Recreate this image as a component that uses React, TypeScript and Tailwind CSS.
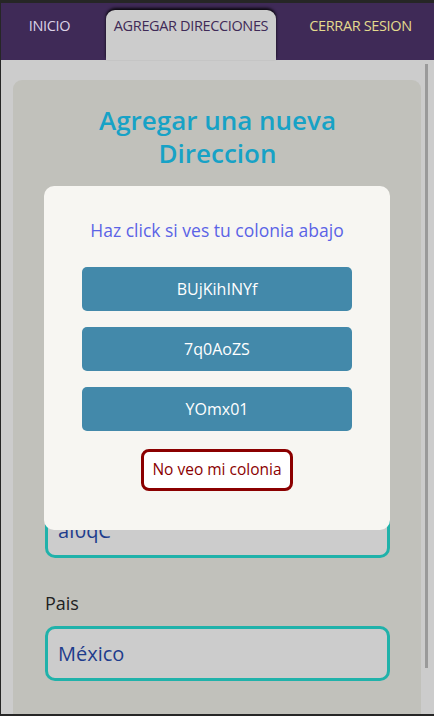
import React from 'react';

const colonias = ['BUjKihINYf', '7q0AoZS', 'YOmx01'];

function Campo({ label, value }: { label: string; value: string }) {
  return (
    <div className="flex flex-col">
      <label className="text-[18px] leading-[24px] text-[#222222] mb-[11px]">{label}</label>
      <div className="h-[55px] rounded-[10px] border-[3px] border-[#20b2aa] bg-[#cccccc] flex items-center pl-[10px] text-[20px] text-[#1e3c8c]">
        {value}
      </div>
    </div>
  );
}

export default function App() {
  return (
    <div className="relative flex h-[716px] w-[434px] flex-col overflow-hidden border-t-[3px] border-b-2 border-l border-[#262626] bg-[#cccccc] font-['Open_Sans',sans-serif]">
      <nav className="flex h-[57px] shrink-0 whitespace-nowrap bg-[#3f2a57] text-[14.5px] leading-[24px] tracking-[-0.025em]">
        <div className="ml-[21px] flex w-[55px] justify-center pt-[11px] text-[#dcd3e6]">INICIO</div>
        <div className="ml-[29px] mt-[7px] flex w-[170px] justify-center rounded-t-[9px] bg-[#cccccc] pt-[4px] text-[#3f2a57] shadow-[0_-2px_3px_rgba(0,0,0,0.85)]">
          AGREGAR DIRECCIONES
        </div>
        <div className="ml-[25px] flex w-[119px] justify-center pt-[11px] text-[#e3da8e]">CERRAR SESION</div>
      </nav>

      <main className="relative flex-1 pl-[12px] pr-[13px] pt-[20px]">
        <div className="h-[700px] rounded-[9px] bg-[#c1c1bb] pl-[32px] pr-[31px] pt-[24px]">
          <h1 className="mb-[52px] text-center text-[26px] font-semibold leading-[33px] text-[#17a2c6]">
            Agregar una nueva Direccion
          </h1>
          <div className="flex flex-col gap-[33px]">
            <Campo label="Calle" value="Av. Reforma" />
            <Campo label="Numero" value="123" />
            <Campo label="Colonia" value="aI0qC" />
            <Campo label="Pais" value="México" />
          </div>
        </div>

        <div className="absolute left-[424px] top-[4px] h-[604px] w-[3px] bg-[#9a9a9a]" />

        <div className="absolute left-[43px] top-[126px] flex h-[344px] w-[346px] flex-col items-center rounded-[10px] bg-[#f7f6f2] pt-[32px]">
          <p className="mb-[25px] text-[17.5px] leading-[24px] text-[#5b63e6]">Haz click si ves tu colonia abajo</p>
          <div className="flex flex-col gap-[16px]">
            {colonias.map((c) => (
              <button key={c} className="h-[44px] w-[270px] rounded-[5px] bg-[#4389aa] text-[16px] text-white">
                {c}
              </button>
            ))}
          </div>
          <button className="mt-[18px] h-[42px] rounded-[8px] border-[3px] border-[#8b0000] bg-white px-[8px] text-[15.5px] text-[#8b0000]">
            No veo mi colonia
          </button>
        </div>
      </main>
    </div>
  );
}
